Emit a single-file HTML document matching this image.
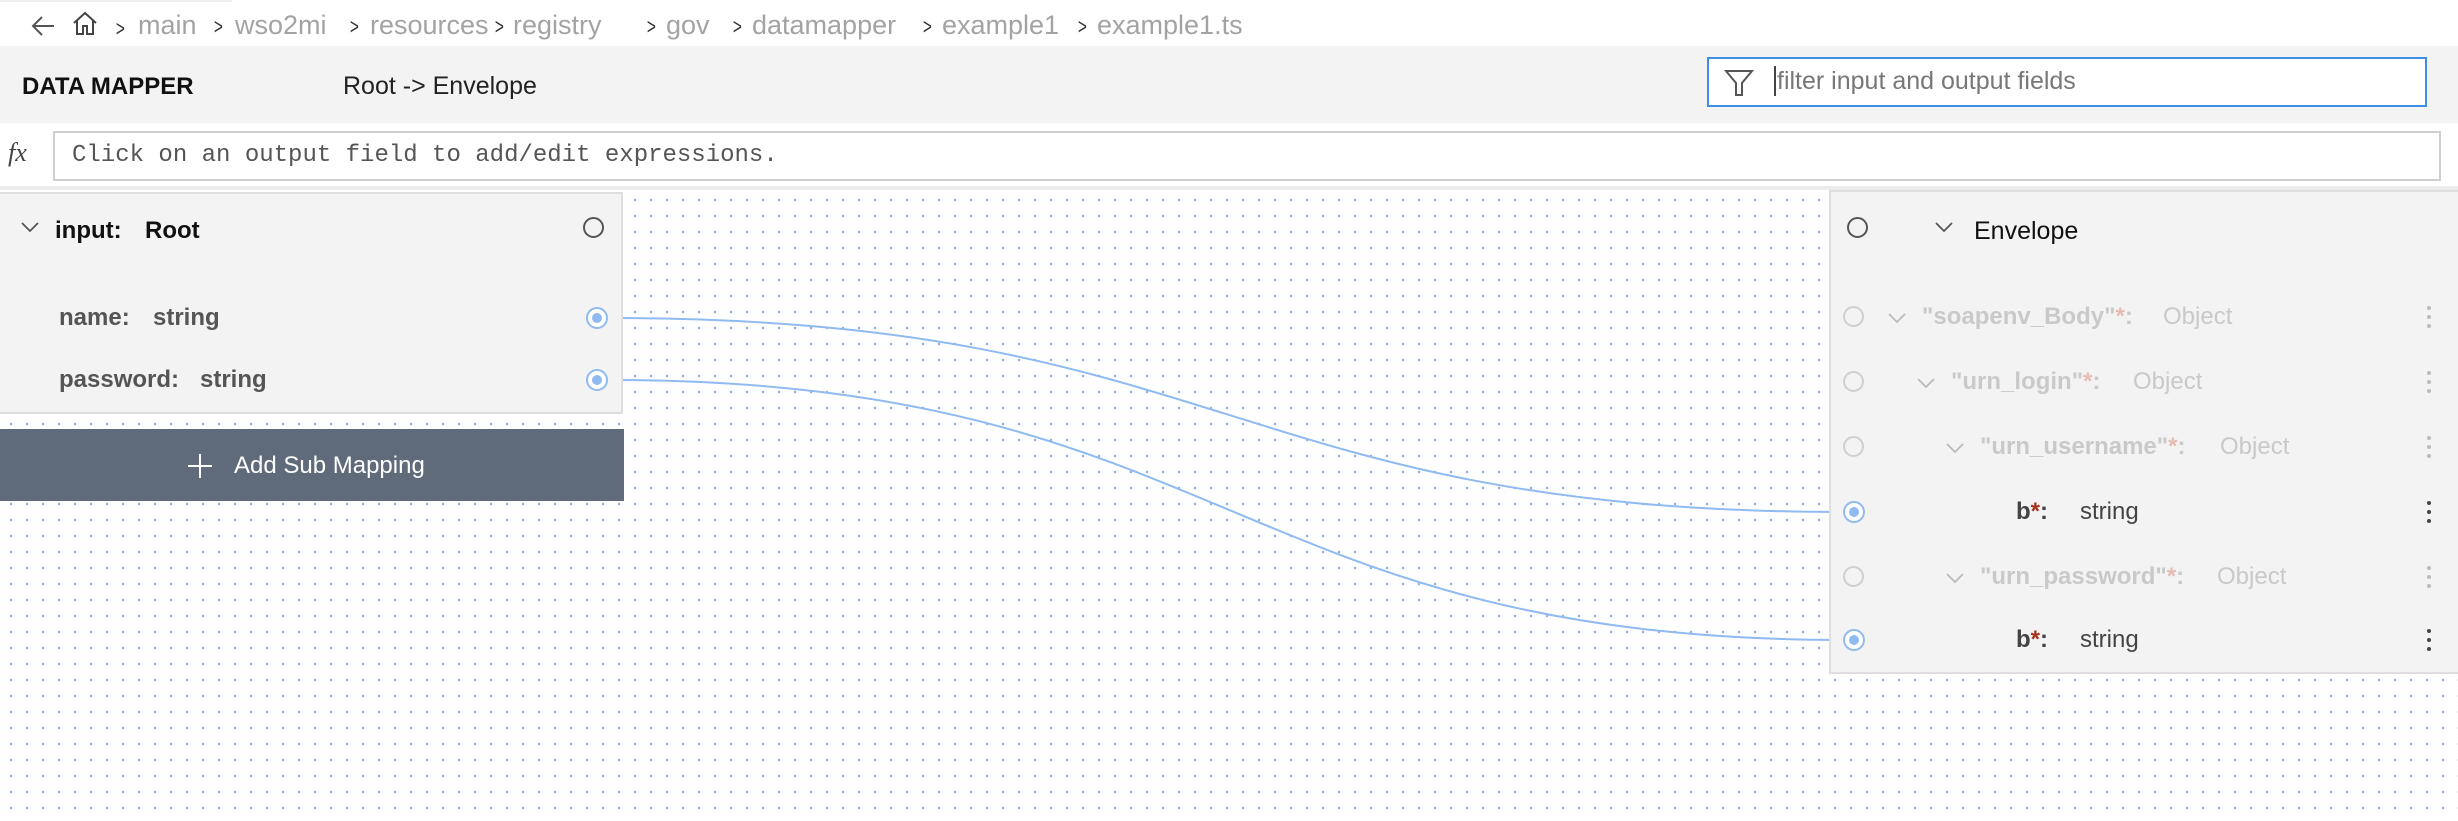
<!DOCTYPE html>
<html><head><meta charset="utf-8"><style>
*{margin:0;padding:0;box-sizing:border-box}
body{width:2458px;height:821px;overflow:hidden;background:#fff;font-family:"Liberation Sans",sans-serif;position:relative}
.a{position:absolute;white-space:nowrap}
.bc{color:#a3a3a3;font-size:27px;top:10px}
.sep{color:#333;font-size:22px;top:14px;transform:scaleX(.7)}
#canvas{position:absolute;left:0;top:190px;width:2458px;height:631px;background-image:radial-gradient(circle,#8db4e6 1.1px,transparent 1.5px);background-size:16px 16px;background-position:3px 2px}
.panel{position:absolute;background:#f3f3f3;border:2px solid #dedede}
.t{font-size:24px}
.circ{position:absolute;width:21px;height:21px;border:2px solid #555;border-radius:50%}
.fc{border-color:#cfcfcf}
.port{position:absolute;width:22px;height:22px;border:2px solid #8fbaf2;border-radius:50%;background:#fff}
.port::after{content:"";position:absolute;left:4px;top:4px;width:10px;height:10px;border-radius:50%;background:#8fbaf2}
.fade{color:#c9c9c9}
.ast{color:#e6bbb2}
.keb{position:absolute;left:2427px;width:6px;font-size:0}
.keb i{display:block;width:4px;height:4px;border-radius:50%;background:#bbb;margin-bottom:5px}
.keb.d i{background:#444}
</style></head><body>
<div class="a" style="left:0;top:0;width:232px;height:2px;background:#eee"></div>
<svg class="a" style="left:30px;top:14px" width="26" height="24" viewBox="0 0 26 24"><path d="M12 3L3 12L12 21M3 12H24" fill="none" stroke="#555" stroke-width="2"/></svg>
<svg class="a" style="left:71px;top:10px" width="28" height="26" viewBox="0 0 28 26"><path d="M3 13L14 3L25 13M6 10V24H12V16H16V24H22V10" fill="none" stroke="#444" stroke-width="2"/></svg>
<div class="a sep" style="left:114px;top:16px">&gt;</div>
<div class="a bc" style="left:138px">main</div>
<div class="a sep" style="left:212px">&gt;</div>
<div class="a bc" style="left:235px">wso2mi</div>
<div class="a sep" style="left:348px">&gt;</div>
<div class="a bc" style="left:370px">resources</div>
<div class="a sep" style="left:493px">&gt;</div>
<div class="a bc" style="left:513px">registry</div>
<div class="a sep" style="left:645px">&gt;</div>
<div class="a bc" style="left:666px">gov</div>
<div class="a sep" style="left:731px">&gt;</div>
<div class="a bc" style="left:752px">datamapper</div>
<div class="a sep" style="left:921px">&gt;</div>
<div class="a bc" style="left:942px">example1</div>
<div class="a sep" style="left:1076px">&gt;</div>
<div class="a bc" style="left:1097px">example1.ts</div>

<div class="a" style="left:0;top:46px;width:2458px;height:77px;background:#f3f3f3"></div>
<div class="a" style="left:22px;top:73px;font-size:24px;font-weight:bold;color:#111">DATA MAPPER</div>
<div class="a" style="left:343px;top:72px;font-size:25px;color:#222">Root -&gt; Envelope</div>
<div class="a" style="left:1707px;top:57px;width:720px;height:50px;border:2px solid #3d8ee6;background:#fff"></div>
<svg class="a" style="left:1724px;top:69px" width="30" height="28" viewBox="0 0 30 28"><path d="M2 2H28L18 14V26H12V14Z" fill="none" stroke="#555" stroke-width="2"/></svg>
<div class="a" style="left:1774px;top:66px;width:2px;height:30px;background:#444"></div>
<div class="a" style="left:1777px;top:67px;font-size:25px;color:#777">filter input and output fields</div>

<div class="a" style="left:8px;top:138px;font-family:'Liberation Serif',serif;font-style:italic;font-size:26px;color:#444">fx</div>
<div class="a" style="left:53px;top:131px;width:2388px;height:50px;border:2px solid #cfcfcf;background:#fff"></div>
<div class="a" style="left:72px;top:142px;font-family:'Liberation Mono',monospace;font-size:24px;color:#555">Click on an output field to add/edit expressions.</div>
<div class="a" style="left:0;top:186px;width:2458px;height:4px;background:#ececec"></div>

<div id="canvas"></div>
<svg class="a" style="left:0;top:0" width="2458" height="821"><path d="M608 318C1230 318 1230 512 1846 512" fill="none" stroke="#8fbaf2" stroke-width="2"/><path d="M608 380C1230 380 1230 640 1846 640" fill="none" stroke="#8fbaf2" stroke-width="2"/></svg>

<div class="panel" style="left:-2px;top:192px;width:625px;height:222px"></div>
<svg class="a" style="left:20px;top:220px" width="20" height="14" viewBox="0 0 20 14"><path d="M2 3L10 11L18 3" fill="none" stroke="#555" stroke-width="1.8"/></svg>
<div class="a t" style="left:55px;top:217px;font-weight:bold;color:#111">input:</div>
<div class="a t" style="left:145px;top:217px;font-weight:bold;color:#111">Root</div>
<div class="circ" style="left:583px;top:217px"></div>
<div class="a t" style="left:59px;top:304px;font-weight:bold;color:#555">name:</div>
<div class="a t" style="left:153px;top:304px;font-weight:bold;color:#555">string</div>
<div class="port" style="left:586px;top:307px"></div>
<div class="a t" style="left:59px;top:366px;font-weight:bold;color:#555">password:</div>
<div class="a t" style="left:200px;top:366px;font-weight:bold;color:#555">string</div>
<div class="port" style="left:586px;top:369px"></div>

<div class="a" style="left:0;top:429px;width:624px;height:72px;background:#5f6a7a"></div>
<svg class="a" style="left:187px;top:453px" width="26" height="26" viewBox="0 0 26 26"><path d="M13 1V25M1 13H25" stroke="#fff" stroke-width="2"/></svg>
<div class="a" style="left:234px;top:452px;font-size:24px;color:#fff">Add Sub Mapping</div>

<div class="panel" style="left:1829px;top:190px;width:632px;height:484px"></div>
<div class="circ" style="left:1847px;top:217px"></div>
<svg class="a" style="left:1934px;top:220px" width="20" height="14" viewBox="0 0 20 14"><path d="M2 3L10 11L18 3" fill="none" stroke="#555" stroke-width="1.8"/></svg>
<div class="a" style="left:1974px;top:217px;font-size:25px;color:#111">Envelope</div>

<div class="circ fc" style="left:1843px;top:306px"></div>
<svg class="a" style="left:1887px;top:311px" width="20" height="14" viewBox="0 0 20 14"><path d="M2 3L10 11L18 3" fill="none" stroke="#bbb" stroke-width="1.8"/></svg>
<div class="a t fade" style="left:1922px;top:303px;font-weight:bold">"soapenv_Body"<span class="ast">*</span>:</div>
<div class="a t fade" style="left:2163px;top:303px">Object</div>
<div class="keb" style="top:306px"><i></i><i></i><i></i></div>

<div class="circ fc" style="left:1843px;top:371px"></div>
<svg class="a" style="left:1916px;top:376px" width="20" height="14" viewBox="0 0 20 14"><path d="M2 3L10 11L18 3" fill="none" stroke="#bbb" stroke-width="1.8"/></svg>
<div class="a t fade" style="left:1951px;top:368px;font-weight:bold">"urn_login"<span class="ast">*</span>:</div>
<div class="a t fade" style="left:2133px;top:368px">Object</div>
<div class="keb" style="top:371px"><i></i><i></i><i></i></div>

<div class="circ fc" style="left:1843px;top:436px"></div>
<svg class="a" style="left:1945px;top:441px" width="20" height="14" viewBox="0 0 20 14"><path d="M2 3L10 11L18 3" fill="none" stroke="#bbb" stroke-width="1.8"/></svg>
<div class="a t fade" style="left:1980px;top:433px;font-weight:bold">"urn_username"<span class="ast">*</span>:</div>
<div class="a t fade" style="left:2220px;top:433px">Object</div>
<div class="keb" style="top:436px"><i></i><i></i><i></i></div>

<div class="port" style="left:1843px;top:501px"></div>
<div class="a t" style="left:2016px;top:498px;font-weight:bold;color:#444">b<span style="color:#a3301a">*</span>:</div>
<div class="a t" style="left:2080px;top:498px;color:#444">string</div>
<div class="keb d" style="top:501px"><i></i><i></i><i></i></div>

<div class="circ fc" style="left:1843px;top:566px"></div>
<svg class="a" style="left:1945px;top:571px" width="20" height="14" viewBox="0 0 20 14"><path d="M2 3L10 11L18 3" fill="none" stroke="#bbb" stroke-width="1.8"/></svg>
<div class="a t fade" style="left:1980px;top:563px;font-weight:bold">"urn_password"<span class="ast">*</span>:</div>
<div class="a t fade" style="left:2217px;top:563px">Object</div>
<div class="keb" style="top:566px"><i></i><i></i><i></i></div>

<div class="port" style="left:1843px;top:629px"></div>
<div class="a t" style="left:2016px;top:626px;font-weight:bold;color:#444">b<span style="color:#a3301a">*</span>:</div>
<div class="a t" style="left:2080px;top:626px;color:#444">string</div>
<div class="keb d" style="top:629px"><i></i><i></i><i></i></div>
</body></html>
